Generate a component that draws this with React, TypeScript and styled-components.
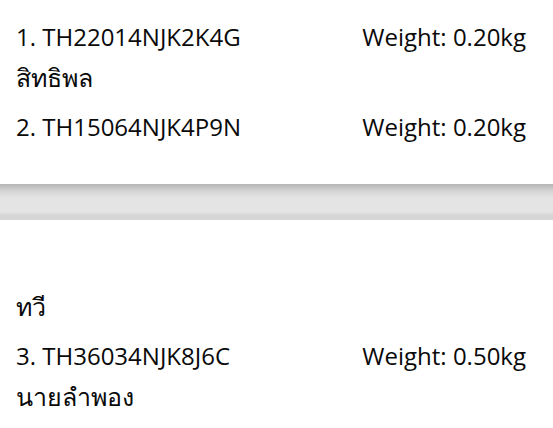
import React from "react";
import styled, { createGlobalStyle } from "styled-components";

const GlobalStyle = createGlobalStyle`
  html, body {
    margin: 0;
    padding: 0;
    background: #ffffff;
  }
  body {
    font-family: "Open Sans", "Noto Sans", "DejaVu Sans", sans-serif;
    color: #0a0a0a;
  }
`;

const Sheet = styled.div`
  width: 553px;
  height: 428px;
  overflow: hidden;
  background: #ffffff;
`;

const Page = styled.section<{ $top: number; $bottom: number }>`
  padding: ${(p) => p.$top}px 27px ${(p) => p.$bottom}px 16px;
  background: #ffffff;
`;

const Row = styled.div`
  display: flex;
  justify-content: space-between;
  align-items: baseline;
  font-size: 24px;
  line-height: 45px;
  white-space: nowrap;
`;

const Name = styled.div`
  font-size: 25px;
  line-height: 45px;
  padding-bottom: 4px;
  margin-top: -4px;
`;

const PageBreak = styled.div`
  height: 36px;
  background: linear-gradient(
    to bottom,
    #b4b4b4 0%,
    #d2d2d2 18%,
    #e4e4e4 38%,
    #e4e4e4 78%,
    #d6d6d6 86%,
    #d6d6d6 100%
  );
`;

type Parcel = { no: number; code: string; weight: string };

function ParcelRow({ item }: { item: Parcel }) {
  return (
    <Row>
      <span>
        {item.no}. {item.code}
      </span>
      <span>Weight: {item.weight}kg</span>
    </Row>
  );
}

export default function App() {
  return (
    <Sheet>
      <GlobalStyle />
      <Page $top={14} $bottom={35}>
        <ParcelRow item={{ no: 1, code: "TH22014NJK2K4G", weight: "0.20" }} />
        <Name>สิทธิพล</Name>
        <ParcelRow item={{ no: 2, code: "TH15064NJK4P9N", weight: "0.20" }} />
      </Page>
      <PageBreak />
      <Page $top={68} $bottom={0}>
        <Name>ทวี</Name>
        <ParcelRow item={{ no: 3, code: "TH36034NJK8J6C", weight: "0.50" }} />
        <Name>นายลำพอง</Name>
      </Page>
    </Sheet>
  );
}
